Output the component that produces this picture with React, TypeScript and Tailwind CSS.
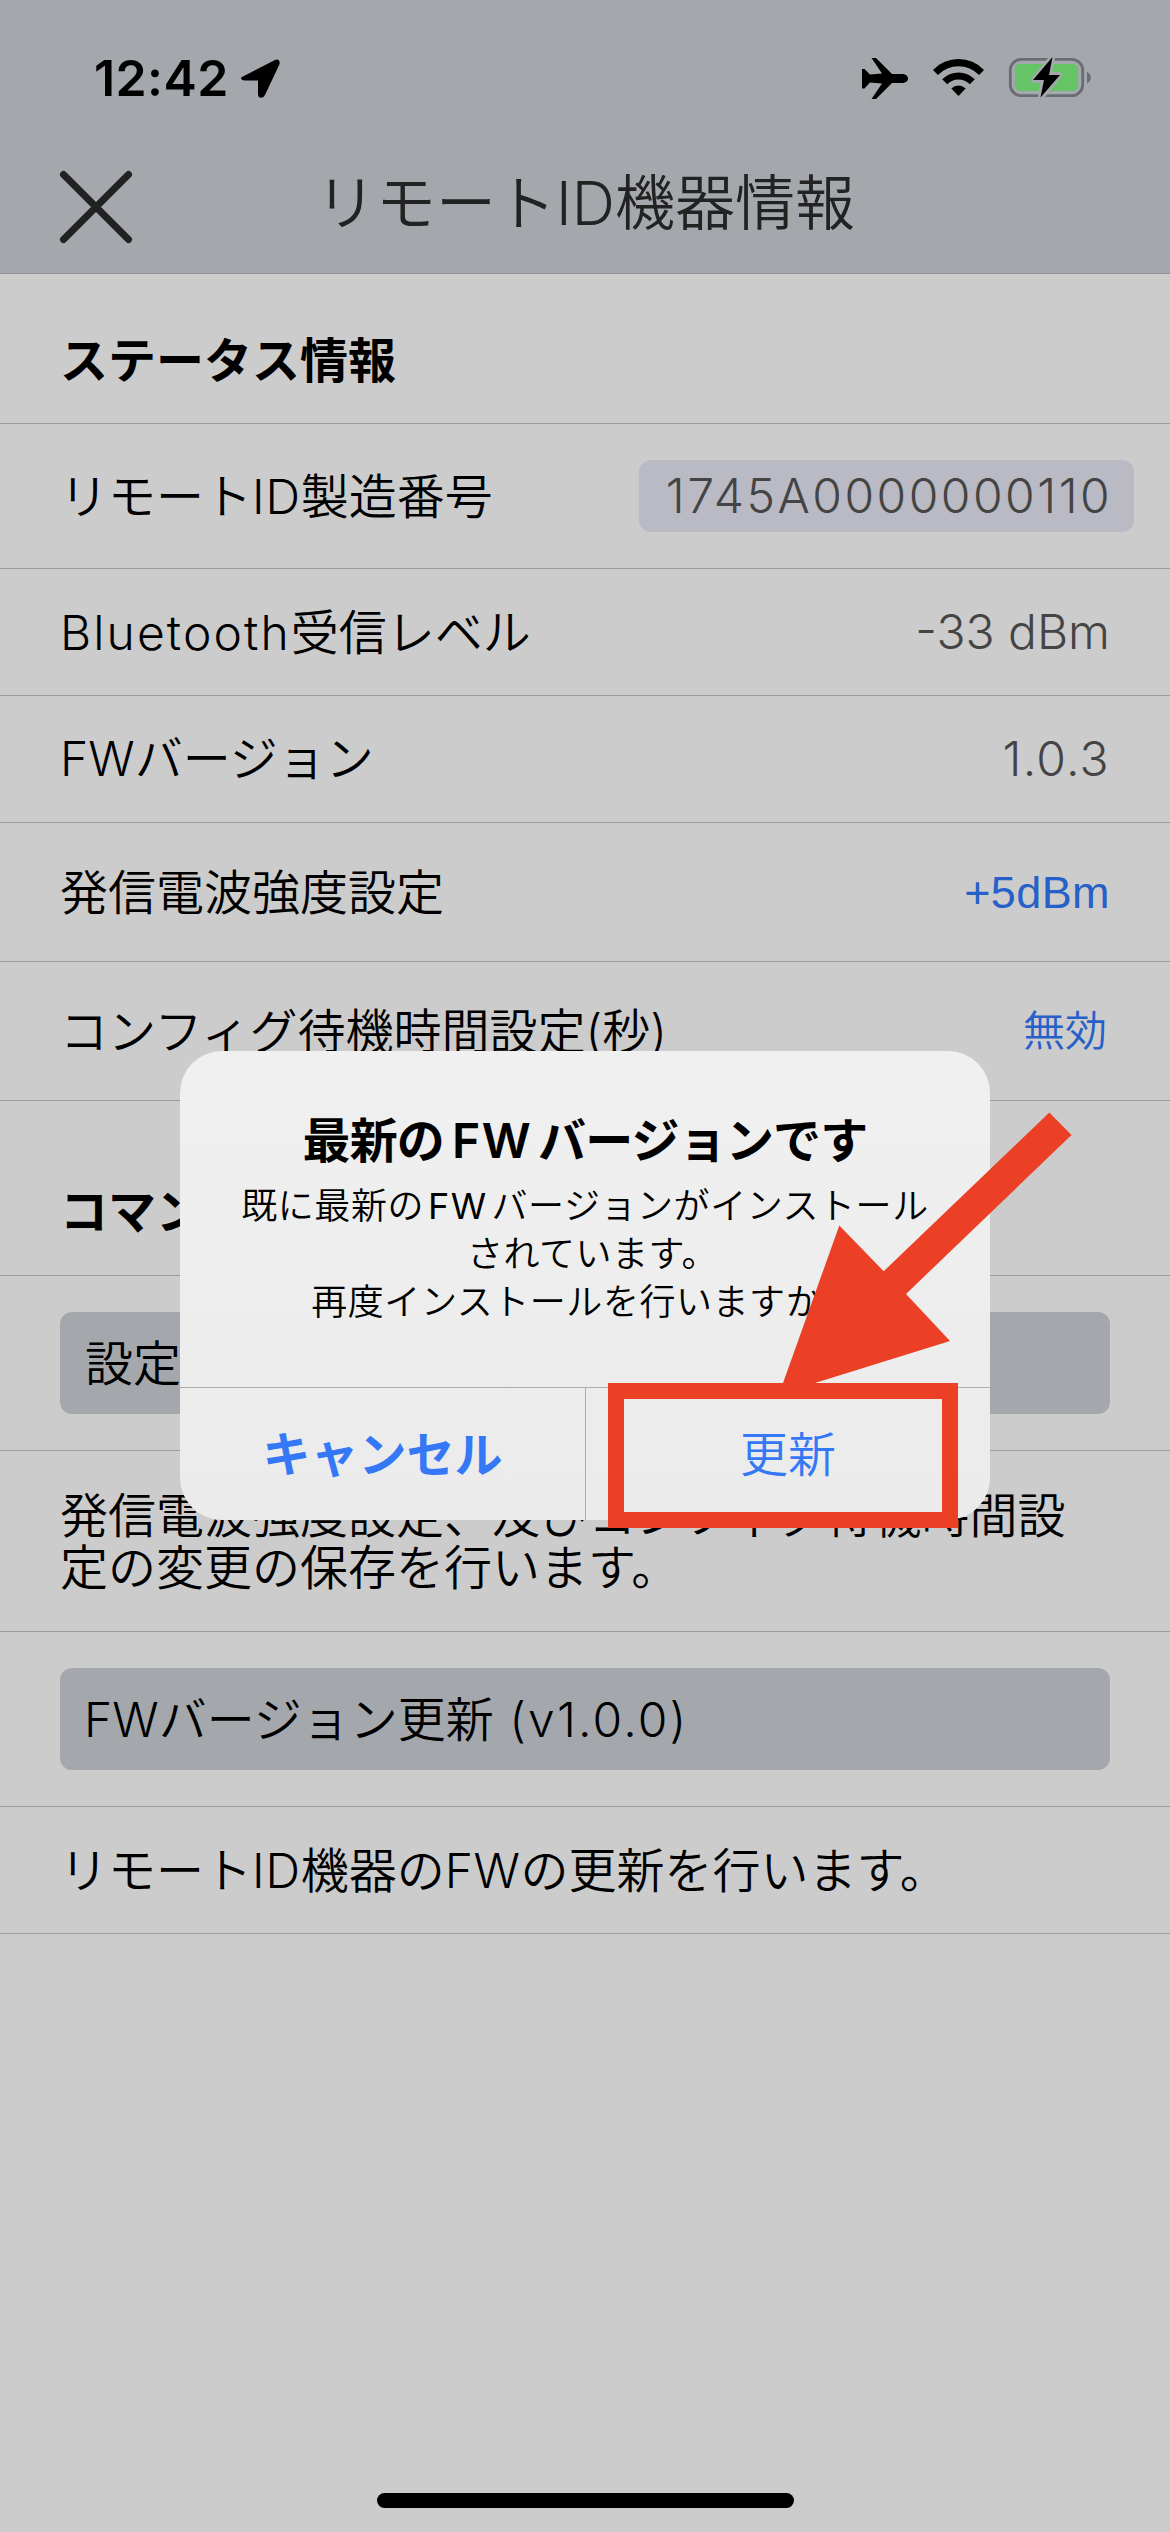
import React from "react";

type RowProps = { height: string; children: React.ReactNode };

function Row({ height, children }: RowProps) {
  return (
    <div className={`flex items-center justify-between border-b border-[#9d9d9d] pl-[60px] pr-[60px] ${height}`}>
      {children}
    </div>
  );
}

function StatusBar() {
  return (
    <div className="flex h-[156px] items-start justify-between pl-[94px] pr-[78px] pt-[52px]">
      <div className="flex items-start">
        <span className="w-[147px] text-[50px] font-semibold leading-[52px] tracking-[0.4px] text-black">12:42</span>
        <svg className="mt-[7px] h-[39px] w-[39px]" viewBox="0 0 39 39">
          <path d="M3 17 L34 1 Q39 -1 38.6 5 L24 36 Q22.500 39 20 38.800 Q17 38.500 17 35 V21.500 H4 Q0.500 21.500 0 19 Q-0.200 18 3 17Z" fill="#000" />
        </svg>
      </div>
      <svg className="mt-[2px] h-[48px] w-[230px]" viewBox="862 54 230 48">
        <path
          d="M862 69 H864.500 L870 74.500 L882 73.500 L871.500 58 H876 L892 74 H901 C906 74 908 76 908 78.500 C908 81 906 83 901 83 H892 L876 99 H871.500 L882 83.500 L870 82.500 L864.500 88.500 H862Z"
          fill="#000"
        />
        <path d="M933 70 A35 35 0 0 1 984 70 L979 75 A28.500 28.500 0 0 0 938 75Z" fill="#000" />
        <path d="M942.200 79.200 A23 23 0 0 1 974.800 79.200 L969.800 84.200 A16 16 0 0 0 947.200 84.200Z" fill="#000" />
        <path d="M951.300 88.400 A10.500 10.500 0 0 1 965.700 88.400 L958.500 96Z" fill="#000" />
        <rect x="1010.300" y="59.300" width="72.400" height="36.400" rx="11" fill="none" stroke="#696c70" strokeWidth="2.800" />
        <path d="M1087 72 C1092 74 1092 81 1087 83.500Z" fill="#696c70" />
        <rect x="1015" y="64" width="63" height="27" rx="5" fill="#65c466" />
        <path
          d="M1052 58 L1034 80 H1044 L1041 97 L1059 75 H1048.500Z"
          fill="#a4a8ad"
          stroke="#a4a8ad"
          strokeWidth="6"
          strokeLinejoin="round"
        />
        <path d="M1052.500 57 L1033 80 H1044 L1040.500 97.500 L1060 75 H1049Z" fill="#000" />
      </svg>
    </div>
  );
}

function TitleBar() {
  return (
    <div className="flex h-[117px] items-start">
      <svg className="ml-[59px] mt-[14px] h-[74px] w-[74px]" viewBox="0 0 74 74">
        <path d="M4.500 4.500 L69.500 69.500 M69.500 4.500 L4.500 69.500" stroke="#222" strokeWidth="7" strokeLinecap="round" />
      </svg>
      <h1 className="ml-[183px] mt-[13px] text-[60px] font-[350] leading-[68px] text-[#222]">リモートID機器情報</h1>
    </div>
  );
}

function Dialog() {
  return (
    <div className="absolute left-[180px] top-[1051px] flex h-[469px] w-[810px] flex-col overflow-hidden rounded-[42px] bg-linear-to-b from-[#f0f0f0] to-[#ebebeb]">
      <div className="flex h-[336px] flex-col items-center pt-[60px] text-center text-black">
        <h2 className="text-[48px] font-bold leading-[60px] tracking-[-0.8px]">
          最新の<span className="ml-[8px] mr-[6px] font-semibold tracking-[1.4px]">FW</span>バージョンです
        </h2>
        <p className="mt-[11px] text-[36px] font-[350] leading-[48px] tracking-[0.55px]">
          既に最新の<span className="mx-[4px] font-normal tracking-[1.4px]">FW</span>バージョンがインストール
          <br />
          <span className="pl-[15px]">されています。</span>
          <br />
          再度インストールを行いますか？
        </p>
      </div>
      <div className="flex h-[133px] border-t border-[#adadad] pt-px text-[48px] text-[#3478f6]">
        <button className="w-[405px] font-bold leading-[60px]">キャンセル</button>
        <button className="-mt-px w-[405px] border-l border-[#adadad] pt-px font-[350] leading-[60px]">更新</button>
      </div>
    </div>
  );
}

function Highlight() {
  return (
    <>
      <div className="absolute left-[608px] top-[1383px] h-[145px] w-[350px] border-[16px] border-[#eb4026]" />
      <svg className="absolute left-[770px] top-[1100px] h-[300px] w-[310px]" viewBox="770 1100 310 300">
        <path d="M1049.300 1112.500 L1071.500 1135 L906 1294 L950 1341 L815 1383 L780 1393 L783 1383 L839.300 1225.500 L883.700 1271.300Z" fill="#eb4026" />
      </svg>
    </>
  );
}

export default function App() {
  return (
    <div className="relative h-[2532px] w-[1170px] overflow-hidden bg-[#ccc] font-['Inter','Noto_Sans_CJK_JP',sans-serif] text-black">
      <header className="h-[274px] border-b border-[#8e9196] bg-[#a4a8ad]">
        <StatusBar />
        <TitleBar />
      </header>
      <main className="text-[48px] font-[350] leading-[52px]">
        <Row height="h-[150px]">
          <h2 className="pt-[25px] font-bold">ステータス情報</h2>
        </Row>
        <div className="flex h-[145px] items-center justify-between border-b border-[#9d9d9d] pl-[60px] pr-[36px]">
          <span className="pt-[2px]">
            リモート<span className="tracking-[0.8px]">ID</span>製造番号
          </span>
          <span className="flex h-[72px] w-[495px] items-center justify-center rounded-[12px] bg-[#b9bac3] pl-[5px] tracking-[2.5px] text-[#444]">
            1745A0000000110
          </span>
        </div>
        <Row height="h-[127px]">
          <span className="pt-[2px]">
            <span className="tracking-[2.1px]">Bluetooth</span>受信レベル
          </span>
          <span className="text-[#444]">-33 dBm</span>
        </Row>
        <Row height="h-[127px]">
          <span>FWバージョン</span>
          <span className="tracking-[1.3px] text-[#444]">1.0.3</span>
        </Row>
        <Row height="h-[139px]">
          <span className="pt-[2px]">発信電波強度設定</span>
          <span className="pt-px font-['Liberation_Sans',sans-serif] text-[45px] tracking-[0.4px] text-[#2660c8]">+5dBm</span>
        </Row>
        <Row height="h-[139px]">
          <span className="pt-px">コンフィグ待機時間設定(秒)</span>
          <span className="pr-[3px] text-[42px] text-[#2660c8]">無効</span>
        </Row>
        <Row height="h-[175px]">
          <h2 className="pt-[48px] font-bold">コマンド</h2>
        </Row>
        <Row height="h-[175px]">
          <button className="h-[102px] w-full rounded-[12px] bg-[#a4a8ad] pl-[25px] pt-[2px] text-left">設定保存</button>
        </Row>
        <Row height="h-[181px]">
          <p className="pt-[2px]">発信電波強度設定、及びコンフィグ待機時間設定の変更の保存を行います。</p>
        </Row>
        <Row height="h-[175px]">
          <button className="h-[102px] w-full rounded-[12px] bg-[#a4a8ad] pl-[24px] pt-[2px] text-left">
            FWバージョン更新 <span className="ml-[2px] tracking-[2.2px]">(v1.0.0)</span>
          </button>
        </Row>
        <Row height="h-[127px]">
          <span className="pt-[2px]">
            リモート<span className="tracking-[0.8px]">ID</span>機器の<span className="tracking-[0.6px]">FW</span>の更新を行います。
          </span>
        </Row>
      </main>
      <Dialog />
      <Highlight />
      <div className="absolute bottom-[24px] left-[377px] h-[15px] w-[417px] rounded-full bg-black" />
    </div>
  );
}
